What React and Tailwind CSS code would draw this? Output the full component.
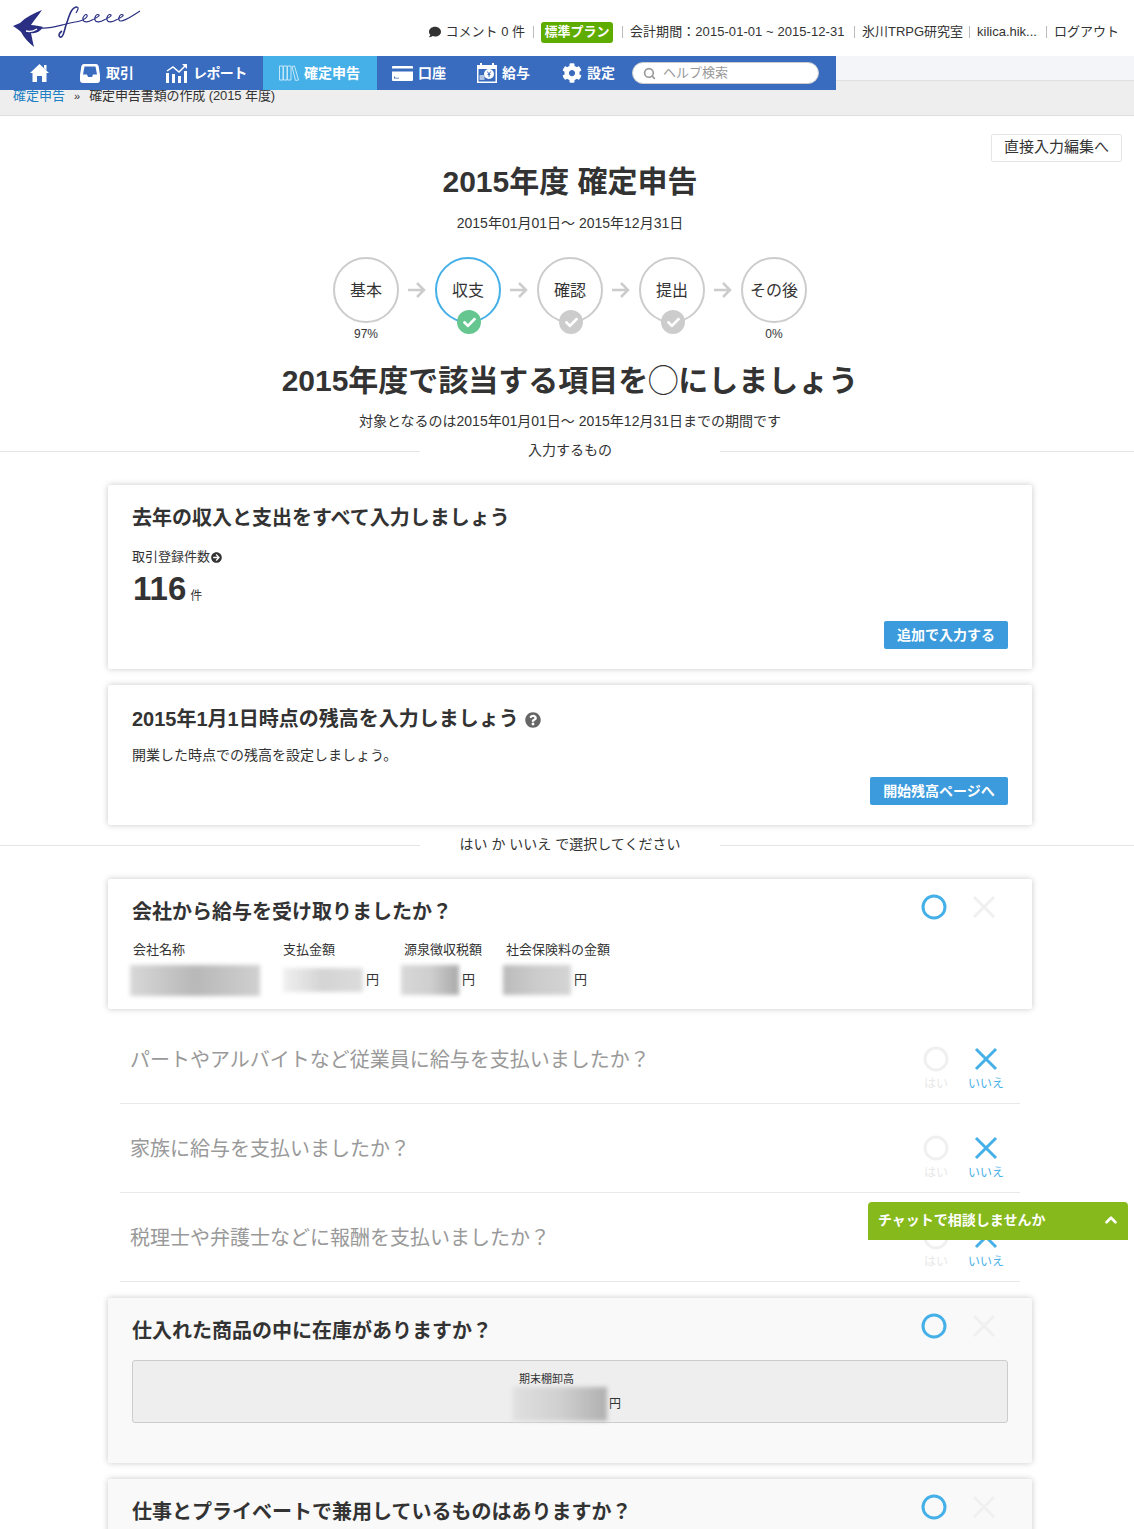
import { FaComment, FaCog, FaQuestionCircle, FaArrowCircleRight, FaCheck } from 'react-icons/fa'
import { FiSearch, FiChevronUp } from 'react-icons/fi'

const navItems = [
  { icon: <HomeIcon />, label: '', cls: 'pl-[16px] pr-[15px]' },
  { icon: <TrayIcon />, label: '取引', cls: 'pl-4 pr-4 gap-[6px]' },
  { icon: <ChartIcon />, label: 'レポート', cls: 'pl-4 pr-[17px] gap-[6px]' },
  { icon: <BooksIcon />, label: '確定申告', active: true, cls: 'pl-4 pr-[17px]' },
  { icon: <CardIcon />, label: '口座', cls: 'pl-[15px] pr-4' },
  { icon: <CalendarIcon />, label: '給与', cls: 'pl-[15px] pr-4' },
  { icon: <FaCog size={20} />, label: '設定', cls: 'pl-4 pr-4' },
]

function Logo() {
  return (
    <svg width="132" height="46" viewBox="0 0 132 46" className="ml-[12px] mt-[5px]">
      <path d="M1 21 L8 18 C14 12 22 8 30 5 C26 11 22 15 19 20 C23 20 27 21 31 22 C28 27 23 29 19 28 C20 33 21 38 22 42 C17 38 12 33 9 27 C7 25 4 23 1 21 Z" fill="#2a2f83" />
      <path d="M14 26 C18 27 22 26 25 24" fill="none" stroke="#fff" strokeWidth="1.5" />
      <path d="M28 23 C38 24 46 21 54 19 C60 17 65 17 68 16 C72 15 76 12 75 10 C74 8 70 12 71 15 C72 18 77 17 80 15 C84 13 88 11 87 10 C85 8 82 12 83 15 C84 18 89 17 92 15 C96 13 100 11 99 10 C97 8 94 12 95 15 C96 18 101 17 104 15 C108 13 112 11 111 10 C109 8 106 12 107 15 C108 18 116 14 128 6" fill="none" stroke="#2a2f83" strokeWidth="1.1" />
      <path d="M65 2 C59 2 57 12 54 20 C52 27 51 33 48 32 C46 31 47 28 50 26" fill="none" stroke="#2a2f83" strokeWidth="1.6" />
      <path d="M65 2 C67 2 66 5 64 8" fill="none" stroke="#2a2f83" strokeWidth="1.2" />
    </svg>
  )
}

function HomeIcon() {
  return (
    <svg width="19" height="18" viewBox="0 0 19 18" fill="currentColor">
      <path d="M9.500 0 19 9h-2.500v9H12v-6H7v6H2.500V9H0z" />
      <path d="M14 1h2.500v5.500L14 4z" />
    </svg>
  )
}

function TrayIcon() {
  return (
    <svg width="20" height="19" viewBox="0 0 20 19" fill="currentColor">
      <path fillRule="evenodd" d="M4 0h12a3 3 0 0 1 2.600 2L20 11v5a3 3 0 0 1-3 3H3a3 3 0 0 1-3-3v-5L1.400 2A3 3 0 0 1 4 0zM4.500 2.500 3 10.500h4l1 2.500h4l1-2.500h4l-1.500-8z" />
    </svg>
  )
}

function ChartIcon() {
  return (
    <svg width="21" height="19" viewBox="0 0 21 19" fill="currentColor">
      <path d="M0 9h3v10H0zM6 10h3v9H6zM12 12h3v7h-3zM18 7h3v12h-3z" />
      <path d="M1 7l6-4 6 5 6-6" fill="none" stroke="currentColor" strokeWidth="1.500" />
      <path d="M16 0h5v5z" />
    </svg>
  )
}

function BooksIcon() {
  return (
    <svg width="20" height="16" viewBox="0 0 20 16" fill="none" stroke="currentColor" strokeWidth="1" className="opacity-70">
      <path d="M0.500 1h3.500v14H0.500zM4.500 1H8v14H4.500zM8.500 1H12v14H8.500zM13 1.500l2.500-.5L19.500 15 16.500 15.500z" />
    </svg>
  )
}

function CardIcon() {
  return (
    <svg width="21" height="15" viewBox="0 0 21 15" fill="currentColor">
      <path d="M1 0h19a1 1 0 0 1 1 1v1.500H0V1a1 1 0 0 1 1-1z" />
      <path fillRule="evenodd" d="M0 5.500h21V14a1 1 0 0 1-1 1H1a1 1 0 0 1-1-1zM2 10.500v2h5v-.7H3v-1.300z" />
    </svg>
  )
}

function CalendarIcon() {
  return (
    <svg width="20" height="20" viewBox="0 0 20 20" fill="currentColor">
      <path fillRule="evenodd" d="M3 0h2v2h10V0h2v2h3v18H0V2h3zM1.500 6v12.500h17V6z" />
      <path d="M2.500 12h5v5h-5z" opacity="0.6" />
      <circle cx="12" cy="11" r="5" />
      <path d="M10.300 8.500 12 11l1.700-2.500M12 11v3M10.500 11.500h3" fill="none" stroke="#396cbf" strokeWidth="1" />
    </svg>
  )
}

function Sep() {
  return <span className="ml-[8px] mr-[7px] h-[12px] w-px bg-[#bbb]" />
}

function Header() {
  return (
    <div className="flex h-[56px] justify-between">
      <Logo />
      <div className="flex items-center whitespace-nowrap pr-[22px] pt-[8px] text-[13px] text-[#333]">
        <FaComment size={12} className="mr-[5px] text-[#333]" />
        <span>コメント 0 件</span>
        <Sep />
        <span className="mr-[1px] flex h-[21px] w-[72px] items-center justify-center rounded-[3px] bg-[#5fac00] font-bold text-white">標準プラン</span>
        <Sep />
        <span className="w-[216px] tracking-[0.06px]">会計期間：2015-01-01 ~ 2015-12-31</span>
        <Sep />
        <span className="w-[99px]">氷川TRPG研究室</span>
        <Sep />
        <span className="w-[61px]">kilica.hik...</span>
        <Sep />
        <span className="w-[64px]">ログアウト</span>
      </div>
    </div>
  )
}

function Nav() {
  return (
    <div className="absolute left-0 top-0 flex h-[34px] w-[836px] bg-[#396cbf] pl-[14px] text-[14px] font-bold text-white">
      {navItems.map((item, i) => (
        <div key={i} className={`flex items-center gap-[5px] ${item.cls} ${item.active ? 'bg-[#45b0e8]' : ''}`}>
          {item.icon}
          {item.label && <span className={item.label === 'レポート' ? 'w-[53px] whitespace-nowrap tracking-[-0.6px]' : ''}>{item.label}</span>}
        </div>
      ))}
      <div className="ml-[1px] mt-[6px] flex h-[22px] w-[187px] items-center gap-[7px] rounded-full border border-[#ccc] bg-white pl-[10px] text-[13px] font-normal text-[#999]">
        <FiSearch size={13} strokeWidth={3} />
        <span>ヘルプ検索</span>
      </div>
    </div>
  )
}

function Step({ label, done, active, pct }) {
  return (
    <div className="flex w-[66px] flex-col items-center">
      <div className={`relative flex h-[66px] w-[66px] items-center justify-center rounded-full border-2 bg-white pt-[1px] text-[16px] text-[#333] ${active ? 'border-[#45b0e8]' : 'border-[#ccc]'}`}>
        {label}
        {done && (
          <span className={`absolute left-[20px] top-[51px] flex h-[24px] w-[24px] items-center justify-center rounded-full text-white ${active ? 'bg-[#66c68f]' : 'bg-[#ccc]'}`}>
            <FaCheck size={13} />
          </span>
        )}
      </div>
      <div className="mt-[1px] h-[20px] text-[12px] leading-[20px] text-[#333]">{pct}</div>
    </div>
  )
}

function Arrow() {
  return (
    <svg width="18" height="16" viewBox="0 0 18 16" fill="none" stroke="#ccc" strokeWidth="2.500" className="mx-[9px] mt-[25px]">
      <path d="M0 8h16M9 1l7 7-7 7" />
    </svg>
  )
}

function Divider({ label }) {
  return (
    <div className="relative mt-[10px] flex h-[20px] items-center justify-center">
      <div className="absolute inset-x-0 top-[10px] h-px bg-[#e5e5e5]" />
      <div className="relative w-[300px] bg-white pb-[2px] text-center text-[14px] leading-[18px] text-[#333]">{label}</div>
    </div>
  )
}

function Card({ className = '', children }) {
  return (
    <div className={`mx-auto w-[924px] rounded-[2px] px-[24px] pt-[19px] shadow-[0_0_6px_rgba(0,0,0,0.22)] ${className}`}>
      {children}
    </div>
  )
}

function Heading({ children }) {
  return <h3 className="text-[20px] font-bold leading-[28px] text-[#333]">{children}</h3>
}

function BlueButton({ children, className = '' }) {
  return (
    <div className={`flex h-[28px] items-center justify-center self-end rounded-[2px] bg-[#3b9bdc] text-[14px] font-bold text-white ${className}`}>
      {children}
    </div>
  )
}

function CircleMark({ on }) {
  return (
    <svg width="26" height="26" viewBox="0 0 26 26" fill="none" stroke={on ? '#45b0e8' : '#f0f0f0'} strokeWidth="3">
      <circle cx="13" cy="13" r="11" />
    </svg>
  )
}

function CrossMark({ on }) {
  return (
    <svg width="26" height="26" viewBox="0 0 26 26" fill="none" stroke={on ? '#45b0e8' : '#f0f0f0'} strokeWidth="3">
      <path d="M3 3l20 20M23 3L3 23" />
    </svg>
  )
}

function CardChoice() {
  return (
    <div className="-mt-[4px] mr-[-1px] flex">
      <div className="flex w-[50px] justify-center"><CircleMark on /></div>
      <div className="flex w-[50px] justify-center"><CrossMark /></div>
    </div>
  )
}

function Row({ children }) {
  return (
    <div className="mx-auto flex h-[89px] w-[900px] justify-between border-b border-[#e8e8e8] pl-[10px] pr-[9px]">
      <div className="flex h-[88px] items-center pt-[2px] text-[20px] text-[#999]">{children}</div>
      <div className="flex pt-[31px]">
        <div className="flex w-[50px] flex-col items-center">
          <CircleMark />
          <span className="mt-[3px] text-[12px] leading-[18px] text-[#e8e8e8]">はい</span>
        </div>
        <div className="flex w-[50px] flex-col items-center">
          <CrossMark on />
          <span className="mt-[3px] text-[12px] leading-[18px] text-[#45b0e8]">いいえ</span>
        </div>
      </div>
    </div>
  )
}

function Patch({ className }) {
  return <div className={`blur-[2px] ${className}`} />
}

function Field({ label, width, patch, yen = true }) {
  return (
    <div className={width}>
      <div className="pl-[3px] text-[13px] leading-[20px] text-[#333]">{label}</div>
      <div className="mt-[4px] flex h-[32px] items-center text-[13px] text-[#333]">
        {patch}
        {yen && <span className="ml-[3px]">円</span>}
      </div>
    </div>
  )
}

export default function App() {
  return (
    <div className="h-[1529px] w-full overflow-hidden bg-white font-['Liberation_Sans','Noto_Sans_CJK_JP',sans-serif]">
      <div className="relative h-[1529px] w-[1140px]">
        <Header />
        <div className="relative">
          <div className="h-[25px] border-b border-[#e0e0e0] bg-[#f4f5f9]" />
          <div className="h-[35px] border-b border-[#ddd] bg-[#eee] pl-[13px] pt-[5px] text-[13px] leading-[20px] text-[#333]">
            <span className="text-[#1c7fc4]">確定申告</span>
            <span className="mx-[9px] text-[11px]">»</span>
            <span className="tracking-[-0.1px]">確定申告書類の作成 (2015 年度)</span>
          </div>
          <Nav />
        </div>

        <div className="flex justify-end pr-[18px] pt-[18px]">
          <div className="flex h-[28px] w-[131px] items-center justify-center rounded-[2px] border border-[#e5e5e5] pb-[1px] text-[15px] text-[#333]">直接入力編集へ</div>
        </div>

        <h1 className="text-center text-[30px] font-bold leading-[40px] text-[#333]">2015年度 確定申告</h1>
        <p className="mt-[11px] text-center text-[14px] leading-[20px] text-[#333]">2015年01月01日〜 2015年12月31日</p>

        <div className="mt-[24px] flex justify-center">
          <Step label="基本" pct="97%" />
          <Arrow />
          <Step label="収支" done active />
          <Arrow />
          <Step label="確認" done />
          <Arrow />
          <Step label="提出" done />
          <Arrow />
          <Step label="その後" pct="0%" />
        </div>

        <h2 className="mt-[17px] text-center text-[30px] font-bold leading-[40px] text-[#333]">2015年度で該当する項目を◯にしましょう</h2>
        <p className="mt-[10px] text-center text-[14px] leading-[20px] text-[#333]">対象となるのは2015年01月01日〜 2015年12月31日までの期間です</p>

        <Divider label="入力するもの" />

        <Card className="mt-[24px] flex h-[184px] flex-col bg-white pb-[20px]">
          <Heading>去年の収入と支出をすべて入力しましょう</Heading>
          <div className="mt-[15px] flex items-center gap-[1px] text-[13px] leading-[20px] text-[#333]">
            取引登録件数
            <FaArrowCircleRight size={11} />
          </div>
          <div className="flex items-baseline gap-[4px] pl-[1px] text-[#333]">
            <span className="text-[33px] font-bold leading-[43px]">116</span>
            <span className="text-[12px]">件</span>
          </div>
          <BlueButton className="mt-auto w-[124px]">追加で入力する</BlueButton>
        </Card>

        <Card className="mt-[16px] flex h-[140px] flex-col bg-white pb-[20px] pt-[20px]">
          <div className="flex items-center gap-[6px]">
            <Heading>2015年1月1日時点の残高を入力しましょう</Heading>
            <FaQuestionCircle size={16} className="mt-[2px] text-[#666]" />
          </div>
          <p className="mt-[12px] text-[14px] leading-[20px] text-[#333]">開業した時点での残高を設定しましょう。</p>
          <BlueButton className="mt-auto w-[138px]">開始残高ページへ</BlueButton>
        </Card>

        <Divider label="はい か いいえ で選択してください" />

        <Card className="mt-[24px] h-[130px] bg-white">
          <div className="flex justify-between">
            <Heading>会社から給与を受け取りましたか？</Heading>
            <CardChoice />
          </div>
          <div className="-ml-[2px] mt-[14px] flex">
            <Field label="会社名称" width="w-[150px]" yen={false} patch={<Patch className="h-[31px] w-[130px] bg-gradient-to-r from-[#d8d8d8] via-[#b8b8b8] to-[#d0d0d0]" />} />
            <Field label="支払金額" width="w-[121px]" patch={<Patch className="ml-[3px] h-[24px] w-[80px] bg-gradient-to-r from-[#f0f0f0] via-[#d4d4d4] to-[#dcdcdc]" />} />
            <Field label="源泉徴収税額" width="w-[102px]" patch={<Patch className="h-[30px] w-[58px] bg-gradient-to-r from-[#d8d8d8] via-[#cfcfcf] to-[#aaaaaa]" />} />
            <Field label="社会保険料の金額" width="w-[130px]" patch={<Patch className="h-[30px] w-[68px] bg-gradient-to-r from-[#bbbbbb] via-[#cccccc] to-[#d4d4d4]" />} />
          </div>
        </Card>

        <div className="mt-[6px]">
          <Row>パートやアルバイトなど従業員に給与を支払いましたか？</Row>
          <Row>家族に給与を支払いましたか？</Row>
          <Row>税理士や弁護士などに報酬を支払いましたか？</Row>
        </div>

        <Card className="mt-[16px] h-[165px] bg-[#f9f9f9]">
          <div className="flex justify-between">
            <Heading>仕入れた商品の中に在庫がありますか？</Heading>
            <CardChoice />
          </div>
          <div className="mt-[15px] h-[63px] rounded-[3px] border border-[#ccc] bg-[#eee] pt-[10px]">
            <div className="mx-auto w-[114px]">
              <div className="pl-[6px] text-[11px] leading-[16px] text-[#333]">期末棚卸高</div>
              <div className="flex items-center text-[12px] text-[#333]">
                <Patch className="h-[34px] w-[94px] bg-gradient-to-r from-[#e0e0e0] via-[#d0d0d0] to-[#b0b0b0]" />
                <span className="ml-[2px]">円</span>
              </div>
            </div>
          </div>
        </Card>

        <Card className="mt-[16px] h-[100px] bg-[#f9f9f9]">
          <div className="flex justify-between">
            <Heading>仕事とプライベートで兼用しているものはありますか？</Heading>
            <CardChoice />
          </div>
        </Card>

        <div className="absolute left-[868px] top-[1202px] flex h-[38px] w-[260px] items-center justify-between rounded-t-[4px] bg-[#86b91b] pb-[2px] pl-[10px] pr-[8px] text-[14px] font-bold text-white">
          <span>チャットで相談しませんか</span>
          <FiChevronUp size={18} strokeWidth={3.5} />
        </div>
      </div>
    </div>
  )
}
